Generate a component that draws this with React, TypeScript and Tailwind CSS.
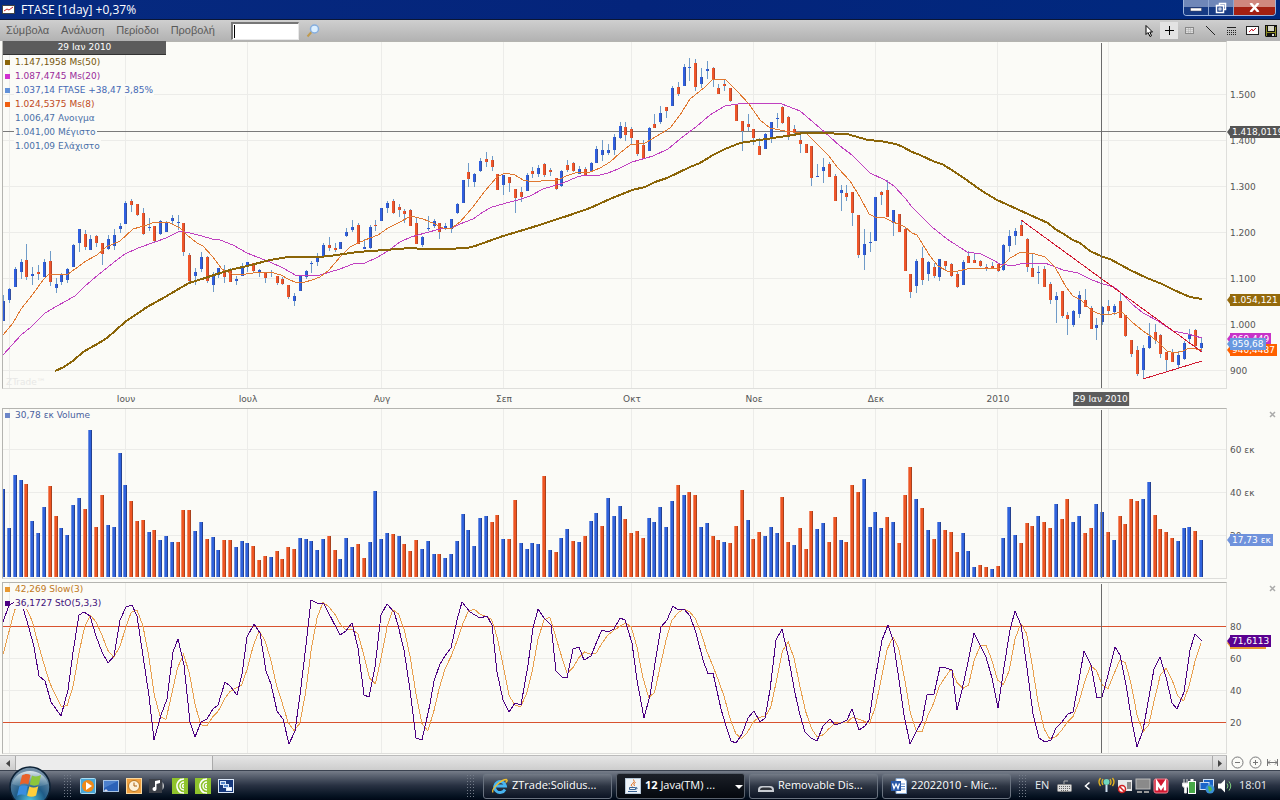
import type { ReactNode } from "react"
import clsx from "clsx"

type Point = [number, number]
// direction (1 up, 0 down), high, body top, body bottom, low
type Candle = [number, number, number, number, number]

const PLOT_LEFT = 3
const PLOT_WIDTH = 1223
const CROSS_X = 1101

const barX = (i: number) => 3.2 + i * 5.815

const candles: Candle[] = [
  [1, 295, 301, 321, 321], [1, 288, 289, 300, 303], [1, 267, 269, 287, 287], [1, 259, 262, 272, 279],
  [0, 244, 260, 277, 280], [1, 267, 274, 276, 285], [0, 265, 272, 274, 280], [1, 259, 262, 277, 277],
  [0, 251, 261, 282, 286], [1, 278, 284, 288, 293], [1, 273, 275, 282, 285], [1, 268, 269, 280, 283],
  [1, 244, 245, 267, 267], [1, 229, 229, 243, 252], [0, 230, 234, 247, 250], [1, 235, 239, 250, 250],
  [0, 235, 236, 243, 247], [0, 243, 243, 254, 265], [1, 235, 239, 249, 250], [1, 229, 235, 246, 250],
  [1, 223, 226, 229, 233], [1, 201, 203, 224, 224], [0, 199, 201, 205, 212], [0, 204, 204, 215, 216],
  [0, 208, 213, 234, 235], [1, 218, 227, 228, 231], [0, 226, 226, 241, 242], [1, 220, 221, 234, 235],
  [1, 221, 222, 232, 232], [1, 215, 218, 221, 225], [1, 215, 222, 223, 230], [0, 223, 223, 252, 256],
  [0, 253, 255, 281, 282], [1, 268, 272, 276, 285], [1, 252, 257, 269, 272], [0, 256, 257, 281, 283],
  [1, 272, 275, 285, 292], [1, 268, 268, 275, 278], [0, 265, 270, 277, 283], [0, 268, 270, 282, 282],
  [1, 276, 279, 281, 285], [1, 263, 266, 276, 276], [1, 262, 262, 267, 272], [0, 263, 263, 271, 273],
  [1, 269, 270, 272, 277], [0, 273, 273, 278, 283], [1, 270, 272, 273, 277], [0, 276, 276, 283, 285],
  [0, 277, 279, 284, 285], [0, 285, 285, 297, 299], [1, 293, 296, 301, 306], [1, 276, 276, 291, 291],
  [1, 270, 271, 277, 279], [1, 261, 263, 264, 273], [1, 253, 258, 262, 266], [1, 243, 245, 256, 256],
  [0, 237, 245, 248, 251], [0, 243, 248, 250, 252], [1, 242, 242, 249, 249], [1, 228, 232, 236, 237],
  [1, 220, 227, 230, 232], [0, 223, 225, 244, 244], [1, 239, 247, 249, 249], [1, 225, 227, 248, 249],
  [0, 220, 225, 226, 231], [1, 208, 208, 221, 221], [1, 201, 203, 208, 213], [0, 199, 201, 213, 214],
  [0, 204, 207, 210, 217], [0, 209, 211, 214, 223], [0, 209, 210, 226, 226], [0, 217, 223, 244, 244],
  [1, 236, 237, 245, 247], [1, 216, 228, 229, 231], [1, 219, 221, 226, 228], [0, 223, 223, 232, 239],
  [1, 223, 226, 228, 230], [1, 219, 219, 229, 233], [1, 203, 204, 213, 214], [1, 180, 180, 203, 203],
  [0, 163, 172, 179, 187], [1, 173, 174, 182, 187], [1, 158, 161, 171, 172], [0, 152, 159, 162, 167],
  [0, 156, 160, 167, 171], [0, 174, 174, 190, 190], [1, 175, 175, 185, 195], [0, 177, 177, 183, 192],
  [0, 189, 189, 198, 213], [0, 187, 192, 197, 202], [1, 173, 175, 191, 191], [0, 167, 171, 174, 178],
  [1, 165, 168, 174, 177], [0, 163, 164, 175, 177], [0, 168, 170, 172, 176], [0, 178, 178, 189, 190],
  [1, 170, 171, 186, 187], [0, 160, 165, 170, 172], [0, 162, 163, 171, 172], [1, 166, 169, 174, 174],
  [0, 167, 169, 175, 175], [1, 162, 163, 171, 171], [1, 146, 149, 163, 163], [1, 140, 150, 155, 161],
  [1, 144, 150, 153, 155], [1, 134, 137, 150, 155], [1, 122, 126, 138, 139], [0, 122, 127, 135, 141],
  [0, 127, 129, 138, 145], [0, 140, 140, 154, 156], [0, 140, 145, 158, 158], [1, 127, 128, 151, 151],
  [0, 114, 124, 128, 128], [1, 106, 113, 122, 124], [0, 107, 107, 111, 118], [1, 86, 88, 106, 106],
  [0, 82, 87, 94, 96], [1, 64, 67, 86, 86], [1, 58, 67, 68, 81], [0, 59, 63, 87, 91],
  [1, 68, 77, 84, 88], [1, 61, 69, 71, 79], [0, 67, 68, 79, 87], [0, 84, 88, 94, 94],
  [0, 79, 84, 86, 91], [0, 88, 88, 101, 102], [0, 104, 104, 121, 121], [0, 121, 121, 131, 151],
  [0, 114, 124, 127, 131], [0, 129, 129, 138, 145], [0, 138, 146, 155, 155], [1, 133, 134, 149, 149],
  [1, 122, 122, 138, 143], [1, 113, 118, 119, 128], [0, 106, 107, 123, 124], [0, 116, 117, 136, 140],
  [0, 125, 129, 133, 135], [0, 134, 140, 144, 153], [0, 144, 144, 153, 153], [0, 146, 146, 178, 186],
  [1, 164, 176, 177, 177], [1, 158, 167, 171, 183], [0, 162, 164, 177, 177], [0, 174, 176, 201, 201],
  [1, 185, 190, 193, 211], [0, 185, 193, 197, 201], [0, 192, 192, 213, 226], [0, 215, 215, 255, 258],
  [1, 229, 244, 255, 270], [1, 232, 242, 243, 252], [1, 197, 197, 241, 241], [0, 191, 192, 195, 205],
  [0, 180, 190, 217, 217], [1, 210, 210, 223, 236], [0, 214, 214, 232, 232], [0, 228, 229, 271, 271],
  [0, 274, 274, 292, 298], [1, 259, 261, 286, 293], [0, 247, 258, 280, 285], [1, 261, 262, 274, 281],
  [0, 263, 267, 276, 278], [1, 259, 259, 277, 281], [0, 261, 261, 266, 271], [0, 263, 264, 276, 277],
  [0, 271, 274, 287, 288], [1, 260, 262, 285, 285], [0, 251, 256, 263, 263], [0, 253, 260, 263, 263],
  [0, 260, 261, 266, 267], [0, 264, 267, 269, 271], [0, 262, 266, 268, 268], [0, 264, 264, 271, 272],
  [1, 244, 245, 270, 271], [1, 230, 236, 246, 252], [1, 228, 231, 236, 245], [0, 220, 225, 236, 236],
  [0, 238, 239, 267, 272], [0, 253, 268, 277, 277], [1, 266, 272, 273, 284], [0, 266, 269, 287, 287],
  [0, 282, 284, 300, 304], [1, 292, 296, 300, 323], [0, 291, 291, 316, 318], [0, 312, 315, 319, 335],
  [1, 310, 311, 325, 327], [1, 291, 295, 314, 318], [0, 289, 300, 307, 307], [0, 306, 308, 329, 329],
  [1, 318, 325, 328, 340], [1, 306, 307, 322, 325], [0, 300, 306, 311, 314], [1, 304, 306, 312, 315],
  [0, 292, 301, 318, 318], [0, 315, 315, 336, 337], [0, 340, 340, 354, 357], [0, 346, 350, 374, 376],
  [1, 345, 348, 370, 378], [1, 323, 336, 348, 349], [0, 324, 332, 340, 344], [0, 334, 335, 354, 358],
  [0, 352, 352, 360, 371], [0, 349, 352, 362, 362], [1, 351, 355, 365, 368], [1, 341, 343, 359, 360],
  [1, 329, 334, 339, 343], [0, 329, 330, 346, 349], [1, 337, 343, 348, 352],
]

// bar heights, negative on down days
const volumes = [
  88, 49, 102, 97, -93, 56, 44, 70, -91, -61, 49, 42, 72, 79, -68, 147, -50, -82, 52, 50, 124, 92, -76, -56,
  -57, 45, -47, 37, 41, 35, -35, -67, -67, 46, 55, -38, 40, 27, -37, -37, 30, 36, 34, -31, -17, -21, 20, -26,
  -18, -30, -28, 39, 38, 36, 27, 38, -41, -27, 18, 39, 30, -33, -19, 35, 86, 38, 44, -43, 41, -33, -26, -37,
  28, 36, 23, -23, 19, 23, 36, 63, 47, 31, 59, 61, -55, -62, 38, -38, -77, 34, 28, 34, 33, -101, 27, -25, 39,
  48, -36, 35, -41, 56, 64, -51, 79, 61, 71, -58, -44, -46, -39, 59, 55, 70, 50, 76, -92, 82, -85, -82, 50,
  54, -41, -37, 35, -34, -51, -87, 57, -38, -45, 41, 50, 44, -80, -35, 32, -49, -28, -66, 48, 54, -35, -60,
  37, -35, -92, -85, 98, 50, 65, 49, -60, 55, -34, -82, -110, 78, -69, 47, -38, 55, -47, -45, -25, 44, 26,
  10, -12, -10, 8, -11, 39, 70, 42, -34, -54, -51, 61, -55, -49, 73, -58, -78, 55, 61, -44, -49, 73, 65, -45,
  37, -61, -53, -78, -76, 78, 95, -62, -48, -45, -39, 36, 49, 50, -46, 37,
]

const ms50: Point[] = [
  [55, 371], [64, 367], [74, 360], [83, 352], [99, 343], [107, 338], [125, 322], [147, 307], [165, 297],
  [182, 287], [189, 283], [205, 278], [217, 274], [230, 270], [247, 266], [270, 260], [288, 257], [318, 257],
  [330, 256], [357, 252], [385, 250], [411, 248], [422, 249], [446, 249], [467, 248], [475, 246], [503, 236],
  [530, 228], [570, 215], [590, 208], [610, 199], [632, 190], [645, 187], [655, 182], [667, 178], [690, 167],
  [700, 163], [713, 155], [725, 149], [740, 143], [753, 141], [773, 138], [793, 135], [803, 133], [820, 133],
  [847, 134], [868, 140], [880, 141], [896, 144], [903, 147], [912, 152], [920, 155], [935, 162], [942, 164],
  [955, 172], [968, 181], [982, 191], [997, 200], [1017, 209], [1030, 215], [1048, 223], [1055, 229],
  [1062, 233], [1073, 240], [1080, 243], [1090, 251], [1103, 257], [1110, 259], [1130, 270], [1147, 278],
  [1162, 284], [1174, 290], [1183, 294], [1190, 297], [1202, 299],
]

const ms20: Point[] = [
  [3, 355], [12, 345], [21, 335], [31, 327], [45, 313], [57, 306], [75, 296], [85, 286], [98, 275], [113, 263],
  [125, 254], [138, 248], [155, 242], [166, 238], [180, 231], [190, 233], [202, 236], [212, 239], [220, 240],
  [233, 245], [247, 253], [257, 257], [270, 262], [283, 268], [297, 276], [320, 275], [340, 269], [353, 264],
  [365, 263], [376, 258], [388, 251], [400, 242], [411, 237], [425, 233], [440, 229], [452, 228], [460, 224],
  [473, 219], [483, 212], [492, 207], [510, 202], [518, 200], [530, 196], [543, 189], [563, 183], [577, 177],
  [585, 175], [600, 175], [608, 173], [618, 169], [632, 162], [653, 156], [668, 149], [680, 139], [696, 127],
  [710, 115], [725, 106], [738, 104], [760, 103], [782, 104], [800, 111], [820, 128], [840, 146], [852, 155],
  [862, 165], [870, 173], [885, 180], [894, 186], [905, 198], [912, 207], [920, 215], [932, 227], [947, 239],
  [967, 252], [981, 254], [993, 260], [1000, 264], [1013, 266], [1023, 263], [1045, 263], [1063, 270],
  [1078, 273], [1092, 280], [1103, 284], [1114, 287], [1120, 292], [1132, 304], [1143, 313], [1158, 321],
  [1173, 331], [1188, 334], [1202, 338],
]

const ms8: Point[] = [
  [3, 335], [13, 323], [21, 309], [33, 294], [43, 280], [48, 275], [55, 274], [68, 274], [75, 269], [86, 261],
  [97, 255], [106, 247], [120, 241], [133, 229], [147, 225], [155, 222], [170, 223], [180, 228], [187, 235],
  [197, 243], [203, 246], [212, 256], [222, 269], [232, 274], [240, 275], [253, 273], [270, 272], [281, 275],
  [288, 279], [297, 283], [305, 282], [312, 280], [320, 277], [329, 270], [340, 257], [350, 247], [358, 243],
  [370, 238], [378, 235], [388, 228], [400, 222], [411, 216], [423, 219], [435, 224], [443, 228], [452, 228],
  [460, 222], [473, 207], [485, 191], [497, 177], [505, 173], [515, 175], [523, 180], [533, 182], [550, 180],
  [558, 180], [566, 176], [575, 173], [590, 172], [600, 168], [610, 162], [620, 153], [630, 145], [645, 143],
  [657, 136], [670, 128], [680, 115], [690, 99], [705, 87], [713, 79], [725, 79], [737, 91], [749, 104],
  [760, 120], [770, 128], [785, 131], [800, 133], [807, 134], [818, 145], [828, 155], [838, 168], [850, 181],
  [860, 197], [869, 214], [875, 217], [883, 217], [893, 222], [905, 227], [912, 233], [917, 235], [925, 248],
  [930, 256], [938, 266], [947, 271], [958, 271], [967, 269], [975, 268], [1000, 268], [1010, 258],
  [1021, 252], [1035, 254], [1045, 257], [1055, 267], [1066, 287], [1073, 296], [1081, 300], [1092, 311],
  [1100, 314], [1112, 314], [1122, 312], [1132, 322], [1143, 331], [1152, 337], [1158, 342], [1167, 351],
  [1175, 353], [1183, 351], [1189, 348], [1202, 350],
]

const stochastic: Point[] = [
  [3, 622], [9, 605], [15, 602], [20, 603], [23, 608], [29, 628], [34, 647], [39, 676], [45, 681], [51, 702],
  [61, 716], [68, 690], [73, 652], [79, 615], [84, 612], [90, 616], [96, 636], [102, 652], [108, 663],
  [114, 656], [120, 620], [126, 607], [132, 605], [137, 616], [143, 656], [149, 696], [154, 740], [161, 715],
  [167, 699], [173, 652], [178, 639], [184, 665], [190, 722], [195, 737], [201, 722], [207, 719], [213, 709],
  [218, 705], [225, 682], [230, 686], [237, 695], [242, 674], [247, 637], [254, 624], [260, 633], [266, 671],
  [271, 684], [277, 711], [283, 719], [289, 744], [295, 731], [300, 695], [306, 645], [311, 600], [317, 603],
  [324, 604], [340, 635], [346, 631], [352, 623], [358, 648], [364, 695], [369, 697], [375, 667], [381, 615],
  [387, 604], [394, 612], [398, 625], [404, 650], [410, 690], [416, 738], [422, 740], [430, 704], [434, 681],
  [440, 664], [445, 656], [451, 648], [457, 620], [462, 602], [470, 612], [480, 618], [487, 616], [492, 625],
  [497, 672], [503, 700], [509, 712], [515, 703], [521, 705], [528, 665], [533, 628], [538, 609], [544, 618],
  [551, 625], [556, 671], [562, 677], [567, 678], [573, 649], [579, 647], [584, 660], [591, 656], [597, 641],
  [602, 630], [608, 632], [614, 629], [620, 618], [625, 620], [632, 643], [637, 680], [644, 718], [650, 695],
  [656, 657], [661, 627], [667, 620], [673, 606], [678, 610], [684, 609], [690, 616], [696, 633], [703, 660],
  [708, 674], [713, 673], [721, 709], [726, 726], [731, 741], [736, 743], [742, 734], [748, 718], [754, 711],
  [760, 722], [765, 718], [770, 690], [776, 640], [782, 629], [788, 655], [795, 693], [800, 715], [805, 732],
  [811, 738], [817, 741], [823, 726], [830, 719], [835, 725], [841, 723], [847, 720], [852, 709], [859, 730],
  [865, 726], [869, 720], [875, 680], [882, 640], [888, 625], [893, 640], [899, 680], [904, 715], [910, 744],
  [916, 732], [922, 721], [927, 695], [934, 694], [940, 667], [946, 668], [952, 670], [957, 710], [962, 690],
  [968, 662], [974, 633], [986, 657], [992, 678], [998, 708], [1004, 667], [1010, 630], [1015, 611],
  [1021, 625], [1027, 668], [1033, 714], [1039, 738], [1045, 742], [1051, 740], [1056, 728], [1062, 722],
  [1068, 714], [1073, 712], [1079, 680], [1084, 651], [1091, 665], [1097, 698], [1102, 697], [1108, 675],
  [1115, 647], [1120, 655], [1126, 685], [1132, 722], [1137, 747], [1143, 730], [1149, 697], [1154, 669],
  [1160, 657], [1166, 677], [1172, 703], [1177, 709], [1184, 692], [1190, 650], [1195, 634], [1202, 641],
]

function valueAt(line: Point[], x: number) {
  const next = line.findIndex((p) => p[0] >= x)
  if (next <= 0) return line[next === 0 ? 0 : line.length - 1][1]
  const [x0, y0] = line[next - 1]
  const [x1, y1] = line[next]
  return y0 + ((y1 - y0) * (x - x0)) / (x1 - x0)
}

// three-bar average of the stochastic, seeded with the two bars before the visible range
const rawSlow = [672, 668, ...candles.map((_, i) => valueAt(stochastic, barX(i)))]
const slow = candles.map(
  (_, i): Point => [barX(i), (rawSlow[i] + rawSlow[i + 1] + rawSlow[i + 2]) / 3]
)

const months = [
  { label: "Ιουν", x: 126 },
  { label: "Ιουλ", x: 248 },
  { label: "Αυγ", x: 382 },
  { label: "Σεπ", x: 504 },
  { label: "Οκτ", x: 632 },
  { label: "Νοε", x: 754 },
  { label: "Δεκ", x: 876 },
  { label: "2010", x: 998 },
]
const gridX = [9, 125, 247, 381, 503, 631, 753, 875, 997, 1108]

const toPoints = (line: Point[]) => line.map((p) => p.join(",")).join(" ")

function Plot({
  top,
  height,
  gridY,
  className,
  children,
}: {
  top: number
  height: number
  gridY: number[]
  className: string
  children: ReactNode
}) {
  return (
    <svg
      className={clsx("block w-full", className)}
      viewBox={`${PLOT_LEFT} ${top} ${PLOT_WIDTH} ${height}`}
      preserveAspectRatio="none"
      shapeRendering="crispEdges"
      aria-hidden="true"
    >
      {gridX.map((x) => (
        <rect key={x} x={x} y={top} width={1} height={height} fill="#ecece9" />
      ))}
      {gridY.map((y) => (
        <rect key={y} x={PLOT_LEFT} y={y} width={PLOT_WIDTH} height={1} fill="#ecece9" />
      ))}
      {children}
      <rect x={CROSS_X} y={top + 1} width={1} height={height - 1} fill="#6b6b6b" />
    </svg>
  )
}

function Panel({ plot, axis, legend }: { plot: ReactNode; axis: ReactNode; legend: ReactNode }) {
  return (
    <section className="flex pl-[2px]">
      <div className="relative min-w-0 flex-1 border border-t-[#b4b4b0] border-r-[#dededb] border-b-[#dededb] border-l-[#b4b4b0]">
        {plot}
        <div className="absolute -top-px left-0">{legend}</div>
      </div>
      <div className="relative w-[53px] shrink-0 overflow-hidden">{axis}</div>
    </section>
  )
}

function LegendRow({ bullet, text, children }: { bullet?: string; text: string; children: ReactNode }) {
  return (
    <li className="flex h-[14px] items-center gap-1 pl-[2px]">
      <span className={clsx("size-[5px]", bullet)} />
      <span className={clsx("bg-[#fbfbf7] px-px leading-3", text)}>{children}</span>
    </li>
  )
}

function AxisLabel({ top, children }: { top: number; children: ReactNode }) {
  return (
    <span className="absolute left-[3px] leading-3 text-[#555]" style={{ top: top - 6 }}>
      {children}
    </span>
  )
}

function Tag({ top, color, arrow, children }: { top: number; color: string; arrow: string; children: ReactNode }) {
  return (
    <span className="absolute left-0 flex items-center" style={{ top: top - 6 }}>
      <span className={clsx("border-y-4 border-r-[3px] border-y-transparent", arrow)} />
      <span className={clsx("h-3 px-[2px] leading-3 text-white", color)}>{children}</span>
    </span>
  )
}

function ClosePanel() {
  return (
    <button aria-label="Close panel" className="absolute top-[3px] right-1">
      <svg className="block size-[7px]" viewBox="0 0 7 7">
        <path d="M1 1l5 5M6 1l-5 5" stroke="#aaa" strokeWidth="1.5" />
      </svg>
    </button>
  )
}

function TitleBar() {
  return (
    <header className="flex h-5 items-start justify-between border-b border-[#0b1635] bg-linear-to-r from-[#062a80] via-[#04247b] to-[#00297f]">
      <div className="flex items-center gap-[6px] pl-[2px]">
        <svg className="h-[9px] w-[13px]" viewBox="0 0 13 9">
          <rect x=".5" y=".5" width="12" height="8" fill="#fff" stroke="#444" />
          <path d="M2 6l3-2 2 1 4-3" fill="none" stroke="#c22" />
        </svg>
        <h1 className="font-['Open_Sans',sans-serif] text-xs leading-[19px] font-medium text-white">
          FTASE [1day] +0,37%
        </h1>
      </div>
      <div className="mr-1 flex h-4 overflow-hidden rounded-b-[4px] border border-t-0 border-[#9db4dc]">
        <button
          aria-label="Minimize"
          className="flex w-[25px] items-center justify-center border-r border-[#8ea6d0] bg-linear-to-b from-[#6f87b8] from-50% to-[#163a84] to-50%"
        >
          <svg className="h-4 w-3" viewBox="0 0 12 16">
            <rect x=".5" y="8" width="11" height="3" fill="#fff" stroke="#445" strokeWidth=".5" />
          </svg>
        </button>
        <button
          aria-label="Restore"
          className="flex w-[25px] items-center justify-center border-r border-[#8ea6d0] bg-linear-to-b from-[#6f87b8] from-50% to-[#163a84] to-50%"
        >
          <svg className="size-3" viewBox="0 0 12 12" fill="none" stroke="#fff" strokeWidth="1.5">
            <path d="M4.500 3.500V1.500H10.500V7.500H8.500" />
            <rect x="1.500" y="3.500" width="7" height="7" />
            <rect x="4" y="6" width="2" height="2" strokeWidth="1" />
          </svg>
        </button>
        <button
          aria-label="Close"
          className="flex w-[41px] items-center justify-center bg-linear-to-b from-[#d0887e] from-50% to-[#a32012] to-50%"
        >
          <svg className="h-[9px] w-[11px]" viewBox="0 0 11 9">
            <path d="M1.500 0l8 9M9.500 0l-8 9" stroke="#fff" strokeWidth="2.500" />
          </svg>
        </button>
      </div>
    </header>
  )
}

function Toolbar() {
  return (
    <div className="flex h-[21px] items-center bg-linear-to-b from-[#cfcfcf] to-[#b2b2b2] pl-[6px] text-[11px] text-[#5a5a5a]">
      <nav className="flex w-[225px] shrink-0 gap-3">
        <button>Σύμβολα</button>
        <button>Ανάλυση</button>
        <button>Περίοδοι</button>
        <button>Προβολή</button>
      </nav>
      <label className="flex h-[18px] w-[68px] items-center border border-t-2 border-l-2 border-[#e8e8e8] border-t-[#777] border-l-[#777] bg-white pl-px">
        <span className="h-[13px] w-px bg-black" />
        <input aria-label="Symbol" className="w-full min-w-0 bg-transparent outline-none" />
      </label>
      <button aria-label="Search" className="ml-[7px]">
        <svg className="size-[14px]" viewBox="0 0 14 14">
          <path d="M1.500 12.500L5.500 8" stroke="#c09a4e" strokeWidth="2" />
          <circle cx="8.500" cy="5" r="4" fill="#dcefff" stroke="#86aede" strokeWidth="1.500" />
        </svg>
      </button>
      <div className="ml-auto flex items-center gap-px pr-px">
        <button aria-label="Pointer" className="flex h-[17px] w-[19px] items-center justify-center">
          <svg className="h-[12px] w-[9px]" viewBox="0 0 9 12">
            <path d="M1 .5v9l2-2 2 4 1.500-.8-1.700-3.700H7.500z" fill="#fff" stroke="#000" />
          </svg>
        </button>
        <button aria-label="Crosshair" className="flex h-[17px] w-[18px] items-center justify-center bg-[#e3e3e3]">
          <svg className="size-[9px]" viewBox="0 0 9 9">
            <path d="M4.500 0v9M0 4.500h9" stroke="#000" />
          </svg>
        </button>
        <button aria-label="Rectangle" className="flex h-[17px] w-[21px] items-center justify-center">
          <svg className="h-[7px] w-[9px]" viewBox="0 0 9 7">
            <rect x=".5" y=".5" width="8" height="6" fill="#ddd" stroke="#888" />
            <path d="M1 2.500h7M1 4.500h7M3.500 1v5M5.500 1v5" stroke="#aaa" strokeWidth=".5" />
          </svg>
        </button>
        <button aria-label="Line" className="flex h-[17px] w-[19px] items-center justify-center">
          <svg className="size-[9px]" viewBox="0 0 9 9">
            <path d="M0 0l9 9" stroke="#222" />
          </svg>
        </button>
        <button aria-label="Levels" className="flex h-[17px] w-[20px] items-center justify-center">
          <svg className="h-[8px] w-[9px]" viewBox="0 0 9 8" stroke="#222" shapeRendering="crispEdges">
            <path d="M0 .5h9" />
            <path d="M0 3.500h9M0 5.500h9M0 7.500h9" strokeDasharray="1 1" />
          </svg>
        </button>
        <button aria-label="Chart type" className="flex h-[17px] w-[20px] items-center justify-center">
          <svg className="h-[9px] w-[13px]" viewBox="0 0 13 9">
            <rect x=".5" y=".5" width="12" height="8" fill="#fff" stroke="#222" />
            <path d="M3 6l3-3 1 2 3-3" fill="none" stroke="#c23" />
          </svg>
        </button>
        <button aria-label="Save" className="flex h-[17px] w-[16px] items-center justify-center">
          <svg className="size-[12px]" viewBox="0 0 12 12">
            <path d="M0 0h12v12H1l-1-1z" fill="#111" />
            <path d="M1 1h1v10H1zM10 2h1v9h-1zM2 7h8v1H2z" fill="#8a8a20" />
            <path d="M3 1h6v5H3z" fill="#d8d8c8" />
            <path d="M7 9h2v2H7z" fill="#ddd" />
          </svg>
        </button>
      </div>
    </div>
  )
}

function PricePanel() {
  return (
    <Panel
      plot={
        <Plot top={42} height={346} className="h-[346px]" gridY={[94, 140, 186, 232, 278, 324, 370]}>
          <rect x={PLOT_LEFT} y={131} width={PLOT_WIDTH} height={1} fill="#7a7a7a" />
          {candles.map(([up, high, top, bottom, low], i) => {
            const x = Math.round(barX(i))
            return (
              <g key={i}>
                <rect x={x} y={high} width={1} height={low - high} fill="#6f9bc8" />
                <rect x={x - 1} y={top} width={3} height={bottom - top} fill={up ? "#2f5fe0" : "#f0562a"} />
                <rect x={x + 1} y={top} width={1} height={bottom - top} fill={up ? "#3350a0" : "#b8452a"} />
              </g>
            )
          })}
          <g fill="none">
            <polyline points={toPoints(ms20)} stroke="#c040c0" />
            <polyline points={toPoints(ms8)} stroke="#e07830" />
            <polyline points={toPoints(ms50)} stroke="#8b6508" strokeWidth={2} />
            <path d="M1021 220L1202 352M1143 379L1202 361" stroke="#d01830" />
          </g>
        </Plot>
      }
      legend={
        <>
          <div className="h-[14px] w-[163px] border-b border-[#333] bg-[#5c5c5c] text-center leading-[13px] text-white">
            29 Ιαν 2010
          </div>
          <ul>
            <LegendRow bullet="bg-[#8b6508]" text="text-[#76560c]">1.147,1958 Ms(50)</LegendRow>
            <LegendRow bullet="bg-[#d030d0]" text="text-[#9a2a9a]">1.087,4745 Ms(20)</LegendRow>
            <LegendRow bullet="bg-[#6090d8]" text="text-[#4468b4]">1.037,14 FTASE +38,47 3,85%</LegendRow>
            <LegendRow bullet="bg-[#f06010]" text="text-[#c04a1c]">1.024,5375 Ms(8)</LegendRow>
            <LegendRow text="text-[#4a70a8]">1.006,47 Ανοιγμα</LegendRow>
            <LegendRow text="text-[#4a70a8]">1.041,00 Μέγιστο</LegendRow>
            <LegendRow text="text-[#4a70a8]">1.001,09 Ελάχιστο</LegendRow>
          </ul>
          <div className="mt-[223px] pl-[3px] text-[#e8e8e6]">ZTrade™</div>
        </>
      }
      axis={
        <>
          <AxisLabel top={54}>1.500</AxisLabel>
          <AxisLabel top={100}>1.400</AxisLabel>
          <AxisLabel top={146}>1.300</AxisLabel>
          <AxisLabel top={192}>1.200</AxisLabel>
          <AxisLabel top={238}>1.100</AxisLabel>
          <AxisLabel top={284}>1.000</AxisLabel>
          <AxisLabel top={330}>900</AxisLabel>
          <Tag top={91} color="bg-[#555]" arrow="border-r-[#555]">1.418,0119</Tag>
          <Tag top={259} color="bg-[#946a0c]" arrow="border-r-[#946a0c]">1.054,121</Tag>
          <Tag top={298} color="bg-[#c832c8]" arrow="border-r-[#c832c8]">969,449</Tag>
          <Tag top={309} color="bg-[#ff6000]" arrow="border-r-[#ff6000]">940,4487</Tag>
          <Tag top={303} color="bg-[#6898e0]" arrow="border-r-[#6898e0]">959,68</Tag>
        </>
      }
    />
  )
}

function MonthAxis() {
  return (
    <div className="mr-[54px] ml-[3px] h-[19px] text-[#555]">
      <div className="relative h-full">
        {months.map(({ label, x }) => (
          <span
            key={label}
            className="absolute top-1 -translate-x-1/2 leading-3"
            style={{ left: `${((x - PLOT_LEFT) / PLOT_WIDTH) * 100}%` }}
          >
            {label}
          </span>
        ))}
        <span
          className="absolute top-[3px] h-[14px] -translate-x-1/2 bg-[#5c5c5c] px-px leading-[14px] whitespace-nowrap text-white"
          style={{ left: `${((CROSS_X - PLOT_LEFT) / PLOT_WIDTH) * 100}%` }}
        >
          29 Ιαν 2010
        </span>
      </div>
    </div>
  )
}

function VolumePanel() {
  return (
    <Panel
      plot={
        <Plot top={409} height={169} className="h-[169px]" gridY={[449, 492, 535]}>
          {volumes.map((v, i) => {
            const x = Math.round(barX(i)) - 2
            const h = Math.abs(v)
            return (
              <g key={i}>
                <rect x={x} y={577 - h} width={4} height={h} fill={v > 0 ? "#2f62dc" : "#ee5522"} />
                <rect x={x} y={577 - h} width={1} height={h} fill={v > 0 ? "#6f90e0" : "#f08a68"} />
                <rect x={x + 3} y={577 - h} width={1} height={h} fill={v > 0 ? "#24408f" : "#a8401c"} />
              </g>
            )
          })}
        </Plot>
      }
      legend={
        <ul>
          <LegendRow bullet="bg-[#6c86c8]" text="text-[#4a5f9e]">30,78 εκ Volume</LegendRow>
        </ul>
      }
      axis={
        <>
          <ClosePanel />
          <AxisLabel top={42}>60 εκ</AxisLabel>
          <AxisLabel top={85}>40 εκ</AxisLabel>
          <AxisLabel top={128}>20 εκ</AxisLabel>
          <Tag top={132} color="bg-[#6f92dc]" arrow="border-r-[#6f92dc]">17,73 εκ</Tag>
        </>
      }
    />
  )
}

function StochasticPanel() {
  return (
    <Panel
      plot={
        <Plot top={583} height={170} className="h-[170px]" gridY={[658, 690]}>
          <rect x={PLOT_LEFT} y={626} width={PLOT_WIDTH} height={1} fill="#d8522e" />
          <rect x={PLOT_LEFT} y={722} width={PLOT_WIDTH} height={1} fill="#d8522e" />
          <g fill="none">
            <polyline points={toPoints(slow)} stroke="#e8a050" />
            <polyline points={toPoints(stochastic)} stroke="#4b0082" />
          </g>
        </Plot>
      }
      legend={
        <ul>
          <LegendRow bullet="bg-[#e89830]" text="text-[#c07820]">42,269 Slow(3)</LegendRow>
          <LegendRow bullet="bg-[#4b0082]" text="text-[#42107a]">36,1727 StO(5,3,3)</LegendRow>
        </ul>
      }
      axis={
        <>
          <ClosePanel />
          <AxisLabel top={45}>80</AxisLabel>
          <AxisLabel top={77}>60</AxisLabel>
          <AxisLabel top={109}>40</AxisLabel>
          <AxisLabel top={141}>20</AxisLabel>
          <Tag top={61} color="bg-[#e89830]" arrow="border-r-[#e89830]">69,152</Tag>
          <Tag top={59} color="bg-[#5a0090]" arrow="border-r-[#5a0090]">71,6113</Tag>
        </>
      }
    />
  )
}

function ScrollRow() {
  return (
    <div className="mt-px flex h-[15px] items-stretch">
      <div className="flex flex-1 border-t border-[#bbb] bg-linear-to-b from-[#e6e6e6] to-[#cdcdcd]">
        <button aria-label="Scroll left" className="flex w-4 items-center justify-center border-r border-[#aaa]">
          <svg className="h-[7px] w-1" viewBox="0 0 4 7">
            <path d="M4 0v7L0 3.500z" fill="#444" />
          </svg>
        </button>
        <div className="w-[197px] border-r border-[#aaa] bg-[#ececec]" />
        <button aria-label="Scroll right" className="ml-auto flex w-[15px] items-center justify-center border-x border-[#aaa]">
          <svg className="h-[7px] w-1" viewBox="0 0 4 7">
            <path d="M0 0v7l4-3.500z" fill="#444" />
          </svg>
        </button>
      </div>
      <div className="flex w-[53px] items-center justify-between pr-[2px] pl-1">
        <button aria-label="Zoom out">
          <svg className="block size-[13px]" viewBox="0 0 13 13" fill="none" stroke="#777">
            <circle cx="6.500" cy="6.500" r="5.500" />
            <path d="M4 6.500h5" />
          </svg>
        </button>
        <button aria-label="Zoom in">
          <svg className="block size-[13px]" viewBox="0 0 13 13" fill="none" stroke="#777">
            <circle cx="6.500" cy="6.500" r="5.500" />
            <path d="M4 6.500h5M6.500 4v5" />
          </svg>
        </button>
        <button aria-label="Fit width">
          <svg className="block h-[7px] w-[11px]" viewBox="0 0 11 7" fill="none" stroke="#777">
            <path d="M.5 0v7M10.500 0v7M1 3.500h9M3 1.500l-2 2 2 2M8 1.500l2 2-2 2" />
          </svg>
        </button>
      </div>
    </div>
  )
}

function Grip() {
  return (
    <svg className="h-[22px] w-2 shrink-0" viewBox="0 0 8 22" stroke="#737b88" strokeDasharray="1 2">
      <path d="M.5 0v22M3.500 0v22M6.500 0v22" />
    </svg>
  )
}

function TaskButton({ icon, active, children }: { icon: ReactNode; active?: boolean; children: ReactNode }) {
  return (
    <button
      className={clsx(
        "relative flex h-[26px] w-[129px] items-center gap-1 rounded-[3px] border pl-2 text-left whitespace-nowrap",
        active
          ? "border-[#59616c] bg-linear-to-b from-[#1c2028] to-[#05080e]"
          : "border-[#69727f] bg-linear-to-b from-[#747b87] via-[#2c3442] via-50% to-[#0c1424]"
      )}
    >
      {icon}
      {children}
    </button>
  )
}

function StartOrb() {
  return (
    <button aria-label="Start" className="relative ml-2 h-[30px] w-11 shrink-0">
      <svg className="absolute -top-[5px] left-0 h-[40px] w-11" viewBox="0 0 44 40">
        <defs>
          <radialGradient id="orb" cx="50%" cy="85%" r="75%">
            <stop offset="0" stopColor="#4fc4e0" />
            <stop offset=".5" stopColor="#1f5c88" />
            <stop offset="1" stopColor="#6f8ca4" />
          </radialGradient>
          <linearGradient id="gloss" x1="0" y1="0" x2="0" y2="1">
            <stop offset="0" stopColor="#f4fafc" stopOpacity=".85" />
            <stop offset="1" stopColor="#9cc0d0" stopOpacity=".15" />
          </linearGradient>
        </defs>
        <circle cx="22" cy="21" r="20" fill="url(#orb)" stroke="#0b2034" strokeWidth="1.500" />
        <path d="M4 18a18.500 17 0 0 1 36 0c-10 4-26 4-36 0z" fill="url(#gloss)" />
        <path d="M14 9.500c3-2 6-2 8.500-.5l-2.200 9.500c-2.500-1.500-5.500-1.500-8.500.3z" fill="#e8622a" />
        <path d="M24 9.500c3 1.500 6 1.200 9-.5l-2.200 9.500c-3 1.500-6 1.500-9 0z" fill="#8cc63c" />
        <path d="M11.300 20.500c3-1.700 6-1.500 8.500-.2l-2.200 9.200c-2.500-1.500-5.500-1.500-8.500.2z" fill="#3a8ee0" />
        <path d="M21.300 20.500c3 1.500 6 1.300 9-.2l-2.200 9.200c-3 1.700-6 1.500-9 .2z" fill="#ffcf3c" />
      </svg>
    </button>
  )
}

function SignalIcon() {
  return (
    <svg className="size-4" viewBox="0 0 16 16" fill="none" stroke="#fff" strokeWidth="1.400">
      <rect width="16" height="16" fill="#8fc32c" stroke="none" />
      <path d="M12 1a7 7 0 0 0 0 14M12 4a4 4 0 0 0 0 8M12 6.500a1.500 1.500 0 0 0 0 3M9 1a8 8 0 0 0 0 14" />
    </svg>
  )
}

function QuickLaunch() {
  return (
    <div className="flex gap-[7px]">
      <a href="#player" aria-label="Media player">
        <svg className="size-4" viewBox="0 0 16 16">
          <rect x=".5" y=".5" width="15" height="15" rx="1" fill="#4aa8d8" stroke="#a8dcf4" />
          <circle cx="8" cy="8" r="6" fill="#f08a18" />
          <path d="M6 4l6 4-6 4z" fill="#fff" />
        </svg>
      </a>
      <a href="#desktop" aria-label="Show desktop">
        <svg className="size-4" viewBox="0 0 16 16">
          <rect x=".5" y="2.500" width="15" height="11" fill="#2b62b8" stroke="#a8c4e4" />
          <path d="M1 3h14L1 10z" fill="#4c80cc" />
          <path d="M1 13l2-2 2 2z" fill="#dde" />
        </svg>
      </a>
      <a href="#clock" aria-label="Clock">
        <svg className="size-4" viewBox="0 0 16 16" fill="none">
          <rect x=".5" y=".5" width="15" height="15" fill="#f0a040" stroke="#f8d8a0" />
          <circle cx="8" cy="8" r="5.500" fill="#fdf0d8" stroke="#b87820" />
          <path d="M8 4.500V8h3" stroke="#a86010" />
        </svg>
      </a>
      <a href="#music" aria-label="Music">
        <svg className="size-4" viewBox="0 0 16 16">
          <rect x="0" y="1" width="13" height="14" fill="#3c4048" />
          <path d="M6 3l5-1v3L7.500 6v5a2 2 0 1 1-1.500-2z" fill="#fff" />
          <path d="M13.500 4q3 4 0 8z" fill="#ccc" />
        </svg>
      </a>
      <a href="#signal-1" aria-label="Signal">
        <SignalIcon />
      </a>
      <a href="#signal-2" aria-label="Signal">
        <SignalIcon />
      </a>
      <a href="#windows" aria-label="Switch windows">
        <svg className="size-4" viewBox="0 0 16 16" stroke="#dce8f8">
          <rect x=".5" y="1.500" width="15" height="13" fill="#16387c" />
          <rect x="2.500" y="3.500" width="5" height="3" fill="#5888cc" />
          <rect x="5.500" y="6.500" width="5" height="3" fill="#5888cc" />
          <rect x="8.500" y="9.500" width="5" height="3" fill="#fff" />
        </svg>
      </a>
    </div>
  )
}

function Tray() {
  return (
    <div className="flex items-center text-[#e8ecf0]">
      <span className="w-[22px]">EN</span>
      <svg className="h-3 w-[15px]" viewBox="0 0 15 12">
        <path d="M7 4V1h4" fill="none" stroke="#aaa" />
        <rect x=".5" y="4.500" width="14" height="7" rx="1" fill="#ddd" stroke="#888" />
        <path d="M2 6.500h11M2 8.500h11M4 10.500h7" stroke="#666" strokeDasharray="1 1" />
      </svg>
      <button aria-label="Show hidden icons" className="mr-2 ml-3">
        <svg className="block h-2 w-[6px]" viewBox="0 0 6 8">
          <path d="M5.500 .5L1.500 4l4 3.500" fill="none" stroke="#fff" strokeWidth="1.500" />
        </svg>
      </button>
      <div className="flex items-center gap-[2px]">
        <svg className="size-[17px]" viewBox="0 0 17 17" fill="none">
          <path d="M5 2q-2 3 0 6M2.500 1q-3 4 0 8M12 2q2 3 0 6M14.500 1q3 4 0 8" stroke="#e8b820" strokeWidth="1.300" />
          <circle cx="8.500" cy="5" r="3" fill="#70d8c0" />
          <path d="M8.500 8v7" stroke="#cde" strokeWidth="2" />
        </svg>
        <svg className="size-4" viewBox="0 0 16 16" fill="none">
          <rect x="1" y="2" width="14" height="11" fill="#e8e8e8" />
          <path d="M10 4h4v7h-4z" fill="#888" />
          <circle cx="5" cy="11" r="3.500" fill="#fff" stroke="#d02020" strokeWidth="1.500" />
          <path d="M2.500 8.500l5 5" stroke="#d02020" strokeWidth="1.500" />
        </svg>
        <svg className="size-4" viewBox="0 0 16 16">
          <rect x="1" y="1" width="14" height="10" fill="#8a8a8a" stroke="#bbb" />
          <path d="M2 13h5v2H2zM9 13h5v2H9z" fill="#999" />
        </svg>
        <svg className="size-4" viewBox="0 0 16 16">
          <rect x="1" y="1" width="14" height="14" rx="2" fill="#d01830" stroke="#f08090" />
          <path d="M4 12.500V4.500l4 6 4-6v8" fill="none" stroke="#fff" strokeWidth="2.500" />
        </svg>
      </div>
      <div className="ml-3 flex items-center gap-[2px]">
        <svg className="size-4" viewBox="0 0 16 16" fill="none">
          <path d="M3 1v4M6 1v4M1.500 5h6v3l-2 2v5h-2v-5l-2-2z" fill="#fff" stroke="#ddd" />
          <rect x="7.500" y="3.500" width="7" height="12" fill="#48a848" stroke="#fff" />
          <rect x="9.500" y="1" width="3" height="2" fill="#fff" />
        </svg>
        <svg className="size-4" viewBox="0 0 16 16">
          <rect x="4.500" y="1.500" width="10" height="8" fill="#1c64c8" stroke="#cfe0f4" />
          <rect x="1" y="4.500" width="9" height="7" fill="#1c64c8" stroke="#cfe0f4" />
          <circle cx="11" cy="11" r="4.500" fill="#3a90d8" />
          <path d="M9 8l3 1 1 3-3 2z" fill="#50b848" />
        </svg>
        <svg className="size-4" viewBox="0 0 16 16" fill="none">
          <path d="M1 5.500h3l4-4v13l-4-4H1z" fill="#fff" />
          <path d="M10 5.500q2 2.500 0 5M12 3.500q3.500 4.500 0 9" stroke="#80d080" />
        </svg>
      </div>
      <time className="mr-[13px] ml-[6px]">18:01</time>
    </div>
  )
}

function Taskbar() {
  return (
    <footer className="flex h-[30px] items-center border-t border-[#3a4250] bg-linear-to-b from-[#767d89] via-[#283142] via-50% to-[#000816] font-['Open_Sans',sans-serif] text-[11px] text-white">
      <StartOrb />
      <div className="ml-3 flex items-center gap-2">
        <Grip />
        <QuickLaunch />
      </div>
      <div className="ml-auto flex items-center gap-2">
        <Grip />
        <div className="flex items-center gap-1">
          <TaskButton
            icon={
              <svg className="size-4" viewBox="0 0 16 16" fill="none">
                <path d="M13 11.500A5.500 5.500 0 1 1 13.500 8H4" stroke="#48b4f0" strokeWidth="2.800" />
                <path d="M1 14.500C-1 11 9 1.500 14.500 1.500c2 1-1 3-1 3" stroke="#f0c030" strokeWidth="1.300" />
              </svg>
            }
          >
            ZTrade:Solidus...
          </TaskButton>
          <TaskButton
            active
            icon={
              <svg className="size-4" viewBox="0 0 16 16" fill="none">
                <rect x=".5" y=".5" width="15" height="15" fill="#eef3f8" stroke="#b8c8d8" />
                <path d="M8.500 1.500q2 2-1 4t0 3M10.500 4q-3 2-1 4" stroke="#e07020" />
                <path d="M4.500 9.500h6v2h-6zM3 13.500h9M11 9.500q2.500 0 0 2" stroke="#3a6494" />
              </svg>
            }
          >
            <span>
              <b>12</b> Java(TM) ...
            </span>
            <span className="absolute top-[11px] right-px border-x-4 border-t-4 border-x-transparent border-t-white" />
          </TaskButton>
          <TaskButton
            icon={
              <svg className="size-4" viewBox="0 0 16 16">
                <path d="M0 12q0-4 4-4h8q4 0 4 4v2H0z" fill="#c8ccd2" />
                <path d="M2 12q0-2.500 3-2.500h6q3 0 3 2.500z" fill="#30343a" />
              </svg>
            }
          >
            Removable Dis...
          </TaskButton>
          <TaskButton
            icon={
              <svg className="size-4" viewBox="0 0 16 16">
                <path d="M5 .5h8l2.500 2.500v12.500H5z" fill="#fff" stroke="#88a8d0" />
                <path d="M10 6h4M10 8.500h4M10 11h4" stroke="#5a88c8" />
                <rect x="0" y="3" width="10" height="10" fill="#2858a8" />
                <path d="M1.500 5.500l1.500 5 2-4.500 2 4.500 1.500-5" fill="none" stroke="#fff" strokeWidth="1.300" />
              </svg>
            }
          >
            22022010 - Mic...
          </TaskButton>
        </div>
        <Grip />
        <Tray />
      </div>
    </footer>
  )
}

export default function App() {
  return (
    <div className="flex flex-col overflow-x-hidden bg-[#fbfbf7] font-['Liberation_Sans',Arial,sans-serif]">
      <TitleBar />
      <Toolbar />
      <main className="font-['DejaVu_Sans',Verdana,sans-serif] text-[9px]">
        <PricePanel />
        <MonthAxis />
        <VolumePanel />
        <div className="h-[3px]" />
        <StochasticPanel />
      </main>
      <ScrollRow />
      <Taskbar />
    </div>
  )
}
